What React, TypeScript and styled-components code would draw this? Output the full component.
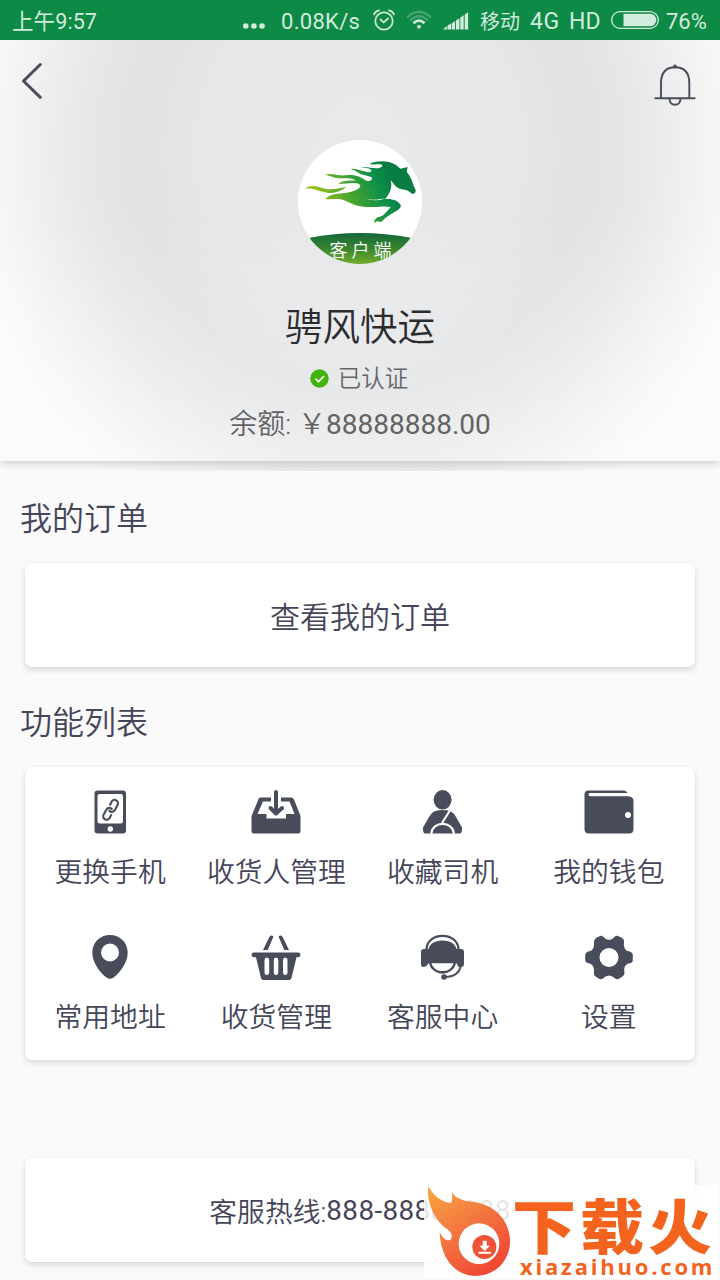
import React from 'react';
import styled, { createGlobalStyle } from 'styled-components';

const INK = '#494d5b';

const GlobalStyle = createGlobalStyle`
  * { box-sizing: border-box; }
  body {
    margin: 0;
    background: #fafafa;
    color: #454559;
    font-family: Roboto, "Noto Sans CJK SC", sans-serif;
    font-weight: 350;
  }
`;

const Screen = styled.div`
  position: relative;
  width: 720px;
  height: 1280px;
  overflow: hidden;
  display: flex;
  flex-direction: column;
  background: #fafafa;
`;

const StatusBar = styled.div`
  flex: none;
  height: 40px;
  padding: 0 12px;
  display: flex;
  align-items: center;
  background: #0d8a46;
  color: #d3ebdd;
  font-size: 22px;
  line-height: 36px;
  white-space: nowrap;
  svg { display: block; flex: none; }
`;

const StatusText = styled.span<{ $width: number; $size?: number; $spacing?: number }>`
  flex: none;
  width: ${p => p.$width}px;
  padding-top: 3px;
  font-size: ${p => p.$size ?? 22}px;
  letter-spacing: ${p => p.$spacing ?? 0}px;
  font-weight: 400;
`;

const StatusIcons = styled.div`
  margin-left: auto;
  display: flex;
  align-items: center;
`;

const IconSlot = styled.span<{ $width: number; $drop?: number }>`
  flex: none;
  width: ${p => p.$width}px;
  padding-top: ${p => p.$drop ?? 0}px;
`;

const Backdrop = styled.div`
  flex: none;
  height: 431px;
  background: radial-gradient(ellipse 390px 430px at 360px 110px, #e8e9eb 0, #e6e7e9 40%, #e1e2e4 57%, #e6e7e8 70%, #f0f0f1 84%, #f7f7f7 94%, #fafafa 100%);
`;

const Header = styled.header`
  height: 421px;
  padding-top: 100px;
  display: flex;
  flex-direction: column;
  align-items: center;
  position: relative;
  background: linear-gradient(rgba(255,255,255,0) 40%, rgba(255,255,255,.3));
  box-shadow: 0 3px 8px rgba(60,60,70,.2);
`;

const NavButton = styled.button<{ $side: 'left' | 'right' }>`
  position: absolute;
  top: 20px;
  ${p => p.$side}: ${p => (p.$side === 'left' ? 20 : 24)}px;
  padding: 0;
  border: 0;
  background: none;
  svg { display: block; }
`;

const Logo = styled.div`
  position: relative;
  width: 124px;
  height: 124px;
  border-radius: 50%;
  overflow: hidden;
  background: #fff;
  svg { display: block; }
`;

const LogoCaption = styled.span`
  position: absolute;
  left: 5px;
  right: 0;
  top: 99px;
  text-align: center;
  font-size: 18px;
  line-height: 24px;
  letter-spacing: 4px;
  color: #fff;
`;

const Name = styled.h1`
  margin: 38px 0 0;
  font-size: 37.5px;
  line-height: 50px;
  font-weight: inherit;
  color: #2c2c2e;
`;

const Verified = styled.div`
  margin: 12px 2px 0 0;
  display: flex;
  align-items: center;
  gap: 9px;
  font-size: 23.5px;
  line-height: 30px;
  color: #666668;
  svg { position: relative; top: -1px; }
`;

const Balance = styled.div`
  margin-top: 14px;
  font-size: 28px;
  line-height: 34px;
  color: #626264;
  white-space: pre;
`;

const Digits = styled.span<{ $spacing?: number }>`
  font-weight: 400;
  letter-spacing: ${p => p.$spacing ?? 0}px;
`;

const Main = styled.main`
  padding: 28px 25px 0;
`;

const SectionTitle = styled.h2<{ $top?: number }>`
  margin: ${p => p.$top ?? 0}px 0 0 -5px;
  font-size: 32px;
  line-height: 40px;
  font-weight: inherit;
`;

const Card = styled.section<{ $top: number }>`
  margin-top: ${p => p.$top}px;
  border-radius: 7px;
  background: #fff;
  box-shadow: 0 3px 6px rgba(0,0,0,.13), 0 0 2px rgba(0,0,0,.05);
`;

const ActionCard = styled(Card)<{ $size: number; $lift?: number }>`
  height: 104px;
  padding-bottom: ${p => p.$lift ?? 0}px;
  display: flex;
  align-items: center;
  justify-content: center;
  font-size: ${p => p.$size}px;
`;

const Grid = styled(Card)`
  height: 293px;
  padding: 20px 2px 0 2px;
  display: grid;
  grid-template-columns: repeat(4, 166.25px);
  grid-auto-rows: 145px;
`;

const Tile = styled.div`
  display: flex;
  flex-direction: column;
  align-items: center;
  font-size: 27.8px;
  line-height: 36px;
  white-space: nowrap;
  svg { display: block; margin-bottom: 18px; }
`;

const Watermark = styled.aside`
  position: absolute;
  left: 424px;
  top: 1185px;
  width: 294px;
  height: 93px;
  display: flex;
  background: rgba(255,255,255,.86);
  color: #f4631e;
  svg { display: block; flex: none; opacity: .92; }
`;

const BrandText = styled.div`
  display: flex;
  flex-direction: column;
`;

const BrandName = styled.div`
  height: 72px;
  padding-top: 16px;
  font-size: 64px;
  line-height: 58px;
  letter-spacing: 4px;
  font-weight: 900;
  white-space: nowrap;
  transform: scaleY(.93);
`;

const BrandUrl = styled.div`
  font-family: "Open Sans", sans-serif;
  font-size: 22px;
  line-height: 18px;
  letter-spacing: 2.8px;
  font-weight: 700;
  margin-left: 8px;
`;

const AlarmIcon = () => (
  <svg width="22" height="22" viewBox="0 0 22 22" fill="none" stroke="currentColor" strokeWidth="1.7" strokeLinecap="round">
    <circle cx="11" cy="12" r="8.7" /><path d="M7.5 10.5 L10.7 13.3 L15 9.5M1 5.3 Q2.5 2 6 1.3M21 5.3Q19.5 2 16 1.3" />
  </svg>
);
const WifiIcon = () => (
  <svg width="26" height="20" viewBox="0 0 26 20" fill="none" stroke="currentColor" strokeWidth="2.2">
    <g opacity=".28"><path d="M1 7.5Q13 -4 25 7.5" /><path d="M4.2 10.5Q13 2 21.8 10.5" /></g>
    <path d="M7.5 13.2Q13 8 18.5 13.2" strokeWidth="2.6" /><circle cx="13" cy="16.7" r="1.9" fill="currentColor" stroke="none" />
  </svg>
);
const SignalIcon = () => (
  <svg width="26" height="18" viewBox="0 0 26 18" fill="currentColor">
    <path d="M0 17.5L4 14v3.5zM4.600 13.500l3.400-2v6H4.600zM8.700 11.200l3.400-2.200v8.500H8.700zM13 8.400l3.400-2.200v11.300h-3.400zM17.300 5.400l3.400-2.200v14.300h-3.400zM21.700 2.400l3.400-2.200v17.300h-3.400z" />
  </svg>
);
const BatteryIcon = () => (
  <svg width="48" height="18" viewBox="0 0 48 18" fill="none">
    <rect x=".7" y=".7" width="46.600" height="16.600" rx="8.300" stroke="currentColor" strokeWidth="1.3" />
    <path d="M12.500 2.700H39a6.300 6.300 0 0 1 0 12.600H12.500z" fill="currentColor" />
  </svg>
);
const DotsIcon = () => (
  <svg width="22" height="6" viewBox="0 0 22 6" fill="currentColor">
    <circle cx="2.800" cy="3" r="2.800" /><circle cx="10.900" cy="3" r="2.800" /><circle cx="19" cy="3" r="2.800" />
  </svg>
);

const BackIcon = () => (
  <svg width="24" height="42" viewBox="0 0 24 42" fill="none" stroke={INK} strokeWidth="3" strokeLinecap="round" strokeLinejoin="round">
    <path d="M20.300 4.500L3.500 21L20.300 37.300" />
  </svg>
);
const BellIcon = () => (
  <svg width="42" height="48" viewBox="0 0 42 48" fill="none" stroke={INK} strokeWidth="1.900" strokeLinecap="round">
    <path d="M1.300 38.300H40.700M7 38V22.500Q7.300 7.500 21 7.300Q35 7.500 35.300 22.500V38" />
    <path d="M15.500 39Q16 44.800 21 44.800T26.500 39" /><circle cx="21" cy="6.300" r="1.400" fill={INK} strokeWidth="1" />
  </svg>
);
const CheckIcon = () => (
  <svg width="19" height="19" viewBox="0 0 19 19" fill="none">
    <circle cx="9.500" cy="9.500" r="9.200" fill="#44b20c" /><path d="M5.500 9.700l2.900 3L14 7.200" stroke="#eef8e8" strokeWidth="1.700" />
  </svg>
);

const HorseLogo = () => (
  <svg width="124" height="124" viewBox="24 30 372 372">
    <defs>
      <linearGradient id="horse" gradientUnits="userSpaceOnUse" x1="70" y1="230" x2="300" y2="130">
        <stop offset="0" stopColor="#a3c91b" /><stop offset=".45" stopColor="#4ca52e" /><stop offset=".8" stopColor="#0c9148" /><stop offset="1" stopColor="#087d43" />
      </linearGradient>
      <linearGradient id="hill" x1="0" x2="0" y1="0" y2="1">
        <stop offset="0" stopColor="#14683a" /><stop offset=".5" stopColor="#38852f" /><stop offset="1" stopColor="#72ae2b" />
      </linearGradient>
    </defs>
    <g fill="url(#horse)">
      <path d="M44 175C62 164 77 168 97 174C124 182 143 175 169 171C152 184 134 191 111 188C86 184 70 174 44 175Z" />
      <path d="M105 208C124 186 151 194 177 187C197 182 210 176 211 167C207 153 173 161 145 162C160 149 184 153 198 151C173 139 151 150 129 141C119 138 112 135 104 134C126 127 144 139 168 136C193 132 214 141 226 151C238 156 248 149 246 143C233 134 217 137 205 128C197 124 191 119 182 117C198 114 216 124 234 127C242 127 245 124 244 121C235 112 224 114 211 112C233 107 251 119 270 113C276 111 279 106 276 104C265 101 250 106 239 101C264 91 293 91 317 104C324 109 327 113 332 116L353 111L350 125C361 138 367 153 371 167L377 181C378 186 373 193 367 192L360 187C350 176 338 181 324 174C313 168 306 153 302 151C308 172 300 191 285 208C303 205 325 211 333 227C330 240 313 245 300 254C289 260 280 269 274 276L261 274L252 279Q252 267 264 261C275 262 286 250 294 240L302 232C286 226 267 232 246 231C215 232 193 226 174 216C152 203 130 208 105 208Z" />
    </g>
    <path d="M222 203Q244 213 275 206L284 206Q249 217 222 203Z" fill="#fff" />
    <path d="M56 324Q210 294 366 324L396 402H24Z" fill="url(#hill)" />
  </svg>
);

const PhoneIcon = () => (
  <svg width="50" height="50" viewBox="0 0 50 50">
    <path fillRule="evenodd" fill={INK} d="M12.500 3.500h25.500a3 3 0 0 1 3 3v37a3 3 0 0 1-3 3H12.500a3 3 0 0 1-3-3v-37a3 3 0 0 1 3-3zM14.500 7a2 2 0 0 0-2 2v25a2.500 2.500 0 0 0 2.500 2.500h20.500A2.500 2.500 0 0 0 38 34V9a2 2 0 0 0-2-2z" />
    <circle cx="25.300" cy="42" r="2.700" fill="#fff" />
    <g fill="none" stroke={INK} strokeWidth="2.100" strokeLinecap="round">
      <path transform="translate(28.300 18.800) rotate(28)" d="M-3.400 .5V-2.800a3.400 3.400 0 0 1 6.800 0V3a3.400 3.400 0 0 1-4.600 3.200" />
      <path transform="translate(22.900 26.900) rotate(208)" d="M-3.400 .5V-2.800a3.400 3.400 0 0 1 6.800 0V3a3.400 3.400 0 0 1-4.600 3.200" />
    </g>
  </svg>
);
const InboxIcon = () => (
  <svg width="50" height="50" viewBox="0 0 50 50" fill={INK}>
    <path fillRule="evenodd" d="M8 11Q8.700 10.500 10 10.500H20V14.500H12L6.500 27H15.500V31.500H35V27H43.500L38.500 14.500H30V10.500H40Q42 10.500 43 12.500L49.500 29V44a2.500 2.500 0 0 1-2.500 2.500H3A2.500 2.500 0 0 1 .5 44V29z" />
    <path d="M25 5V25M19.500 21L25 26.500L31 21" fill="none" stroke={INK} strokeWidth="4" strokeLinecap="round" strokeLinejoin="round" />
  </svg>
);
const DriverIcon = () => (
  <svg width="50" height="50" viewBox="0 0 50 50" fill={INK}>
    <ellipse cx="24.600" cy="12.800" rx="9" ry="9.700" />
    <path d="M16.600 24.300Q24.600 21.500 32.600 24.300Q36 26 38 30L44 40.500Q44.500 46.500 41.500 46.500H7.500Q4.500 46.500 5 40.500L11 30Q13.500 25.500 16.600 24.300Z" />
    <path d="M13.200 47C14.200 33.500 35 33.500 36 47M24 36L32 23.500" fill="none" stroke="#fff" strokeWidth="2.100" />
  </svg>
);
const WalletIcon = () => (
  <svg width="50" height="50" viewBox="0 0 50 50" fill={INK}>
    <path d="M4.500 3.500H39Q42.500 3.500 43.500 6H6Q4.500 6 4.500 7.500T6 9.300H44Q49.500 9.800 49.500 14V42Q49.500 46.500 45 46.500H5Q.5 46.500 .5 42V7.500Q.5 3.500 4.500 3.500Z" />
    <circle cx="44" cy="28" r="3" fill="#fff" />
  </svg>
);
const PinIcon = () => (
  <svg width="50" height="50" viewBox="0 0 50 50">
    <path fillRule="evenodd" fill={INK} d="M25 3C15 3 7.300 10.500 7.300 20.500C7.300 31 15.500 41 21.500 45.600Q25 48 28.500 45.600C34.500 41 42.700 31 42.700 20.500C42.700 10.500 35 3 25 3ZM25 11.500a9 9 0 1 1 0 18a9 9 0 1 1 0-18Z" />
  </svg>
);
const BasketIcon = () => (
  <svg width="50" height="50" viewBox="0 0 50 50">
    <path fillRule="evenodd" fill={INK} d="M2.800 20.500H47.200Q49.500 20.500 49.500 22.700T47.200 25.300H45.500L40.500 46Q40 48 38 48H12Q10.500 48 10 46L5 25.300H2.800Q.5 25 .5 22.800T2.800 20.500ZM15.800 25.500Q13.500 25.500 13.500 28V40.500Q13.500 43 15.800 43T18.200 40.500V28Q18.200 25.500 15.800 25.500ZM25 25.500Q22.800 25.500 22.800 28V40.500Q22.800 43 25 43T27.300 40.500V28Q27.300 25.500 25 25.500ZM34.300 25.500Q32 25.500 32 28V40.500Q32 43 34.300 43T36.500 40.500V28Q36.500 25.500 34.300 25.500Z" />
    <path d="M12 18L18.300 5Q20 2.500 22.500 4.500L16.700 18ZM38 18L31.700 5Q30 2.500 27.500 4.500L33.300 18Z" fill={INK} />
  </svg>
);
const SupportIcon = () => (
  <svg width="50" height="50" viewBox="0 0 50 50" fill={INK}>
    <path d="M8.500 17C9.500 -.5 39.500 -.5 40.500 17" fill="none" stroke={INK} strokeWidth="2.200" />
    <path d="M10.500 17C13 5.800 36 5.800 38.500 17H43Q46 17 46 20V32Q46 35 43 35H40.500L38.500 31.300H10.500L8.500 34Q3 36.500 3 32V20Q3 17 6 17Z" />
    <path d="M12 31C15.500 43.500 33.500 43.500 37 31" fill="none" stroke={INK} strokeWidth="2.600" />
    <path d="M43 33C41.500 42 35.500 45 26.500 45" fill="none" stroke={INK} strokeWidth="1.900" />
    <circle cx="26" cy="45" r="2.800" />
  </svg>
);
const GearIcon = () => (
  <svg width="50" height="50" viewBox="0 0 50 50">
    <path fillRule="evenodd" fill={INK} d="M13 5.500L16 4Q18 3.300 19.500 5Q22 8 25 8T30.500 5Q32 3.300 34 4L38 6Q40.500 7.500 40 10.500C39.500 15 41 19.500 46 19.500Q48.800 20.500 48.800 23V28Q48.800 30.700 46 31.200C41 31.500 39.500 36 40.500 40.500Q40.500 43 38.500 44.500L34.500 47Q32.500 47.800 30.500 46Q28 43.500 25 43.500T19.500 46Q17.500 47.800 15.500 47L11.500 44.500Q9.500 43 10 40.500C10.500 36 9 31.500 4 31.200Q1.200 30.500 1.200 28V23Q1.200 20.500 4 19.500C9 19.500 10.500 15 10 10.500Q9.700 7.500 13 5.500ZM25 16a9.500 9.500 0 1 1 0 19a9.500 9.500 0 1 1 0-19Z" />
  </svg>
);

const FlameIcon = () => (
  <svg width="88" height="93" viewBox="42 105 264 279">
    <defs>
      <linearGradient id="flame" x1="0" y1="0" x2=".65" y2="1">
        <stop offset="0" stopColor="#f7a02d" /><stop offset=".45" stopColor="#f47331" /><stop offset="1" stopColor="#ee3924" />
      </linearGradient>
    </defs>
    <path fill="url(#flame)" d="M55 109C68 133 92 157 124 160C128 147 127 136 125 126C139 148 161 153 190 156C254 163 300 211 300 275C299 337 252 378 195 378C134 377 91 323 89 246C97 264 108 275 122 269C129 258 124 245 110 236C79 215 48 162 55 109Z" />
    <circle cx="207" cy="281" r="61" fill="#fff" />
    <circle cx="223" cy="291" r="36" fill="#ee4628" />
    <path d="M218 272h12v15h10l-16 16-16-16h10zM205 305h38v6h-38z" fill="#fff" />
  </svg>
);

const features = [
  { label: '更换手机', Icon: PhoneIcon },
  { label: '收货人管理', Icon: InboxIcon },
  { label: '收藏司机', Icon: DriverIcon },
  { label: '我的钱包', Icon: WalletIcon },
  { label: '常用地址', Icon: PinIcon },
  { label: '收货管理', Icon: BasketIcon },
  { label: '客服中心', Icon: SupportIcon },
  { label: '设置', Icon: GearIcon },
];

export default function App() {
  return (
    <Screen>
      <GlobalStyle />
      <StatusBar>
        <StatusText $width={100} $size={21.5} $spacing={0.1}>上午9:57</StatusText>
        <StatusIcons>
          <IconSlot $width={38} $drop={12}><DotsIcon /></IconSlot>
          <StatusText $width={92} $spacing={0.3}>0.08K/s</StatusText>
          <IconSlot $width={33}><AlarmIcon /></IconSlot>
          <IconSlot $width={37}><WifiIcon /></IconSlot>
          <IconSlot $width={37} $drop={2}><SignalIcon /></IconSlot>
          <StatusText $width={50} $size={20}>移动</StatusText>
          <StatusText $width={39} $size={23} $spacing={0.5}>4G</StatusText>
          <StatusText $width={42} $size={23}>HD</StatusText>
          <IconSlot $width={55}><BatteryIcon /></IconSlot>
          <StatusText $width={42}>76%</StatusText>
        </StatusIcons>
      </StatusBar>
      <Backdrop>
        <Header>
          <NavButton $side="left" aria-label="返回"><BackIcon /></NavButton>
          <NavButton $side="right" aria-label="消息"><BellIcon /></NavButton>
          <Logo>
            <HorseLogo />
            <LogoCaption>客户端</LogoCaption>
          </Logo>
          <Name>骋风快运</Name>
          <Verified><CheckIcon />已认证</Verified>
          <Balance>余额: {'\uFFE5'}<Digits>88888888.00</Digits></Balance>
        </Header>
      </Backdrop>
      <Main>
        <SectionTitle>我的订单</SectionTitle>
        <ActionCard $top={24} $size={30} $lift={1}>查看我的订单</ActionCard>
        <SectionTitle $top={36}>功能列表</SectionTitle>
        <Grid $top={24}>
          {features.map(({ label, Icon }) => (
            <Tile key={label}><Icon />{label}</Tile>
          ))}
        </Grid>
        <ActionCard $top={98} $size={27.8}>客服热线:<Digits $spacing={0.4}>888-88888888</Digits></ActionCard>
      </Main>
      <Watermark>
        <FlameIcon />
        <BrandText>
          <BrandName>下载火</BrandName>
          <BrandUrl>xiazaihuo.com</BrandUrl>
        </BrandText>
      </Watermark>
    </Screen>
  );
}
